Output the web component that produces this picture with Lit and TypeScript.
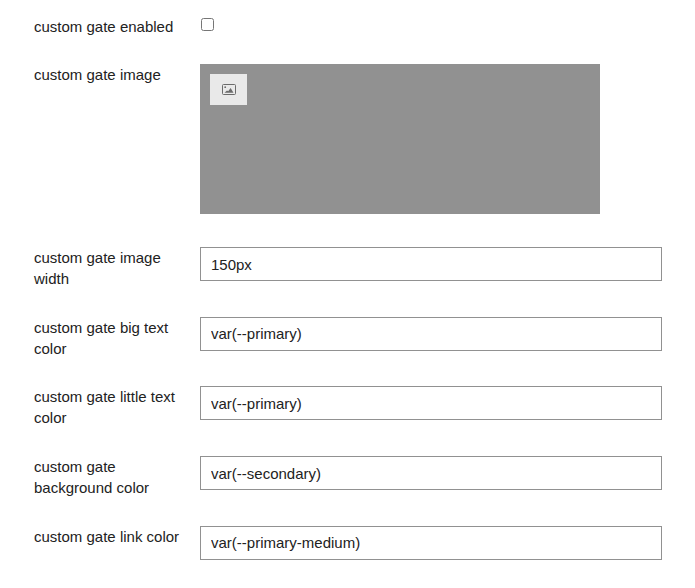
import { LitElement, css, html } from 'lit'
import { customElement } from 'lit/decorators.js'

const textFields = [
  { label: 'custom gate image width', value: '150px' },
  { label: 'custom gate big text color', value: 'var(--primary)' },
  { label: 'custom gate little text color', value: 'var(--primary)' },
  { label: 'custom gate background color', value: 'var(--secondary)' },
  { label: 'custom gate link color', value: 'var(--primary-medium)' },
]

@customElement('app-root')
export class AppRoot extends LitElement {
  render() {
    return html`
      <div class="form">
        <div class="row check-row">
          <div class="name">custom gate enabled</div>
          <div class="value"><input class="check" type="checkbox" /></div>
        </div>
        <div class="row image-row">
          <div class="name">custom gate image</div>
          <div class="value">
            <div class="uploader">
              <button class="upload" aria-label="upload image">
                <svg width="14" height="11" viewBox="0 0 14 11">
                  <rect x="0.5" y="0.5" width="13" height="10" rx="1" fill="#e9e9e9" stroke="#6b6b6b" />
                  <circle cx="3.2" cy="3.2" r="0.9" fill="#6b6b6b" />
                  <path d="M2.5 8.8 L5 6.4 L6.2 7.2 L8.6 4 L11.5 8.8 Z" fill="#6b6b6b" />
                </svg>
              </button>
            </div>
          </div>
        </div>
        ${textFields.map(
          (f) => html`
            <div class="row text-row">
              <div class="name">${f.label}</div>
              <div class="value"><input class="text" type="text" .value=${f.value} /></div>
            </div>
          `
        )}
      </div>
    `
  }

  static styles = css`
    :host {
      display: block;
      background: #fff;
      min-height: 588px;
      font-family: 'Liberation Sans', Arial, sans-serif;
      font-size: 15px;
      color: #222;
    }

    .form {
      display: flex;
      flex-direction: column;
      padding: 16px 33px 0 34px;
    }

    .row {
      display: grid;
      grid-template-columns: 150px 1fr;
      column-gap: 16px;
    }

    .name {
      line-height: 21px;
      color: #222;
    }

    .check-row {
      height: 48px;
    }

    .check {
      display: block;
      width: 13px;
      height: 13px;
      margin: 2px 0 0 1px;
    }

    .image-row {
      height: 183px;
    }

    .uploader {
      width: 400px;
      height: 150px;
      background: #919191;
      padding: 10px;
      box-sizing: border-box;
    }

    .upload {
      display: flex;
      align-items: center;
      justify-content: center;
      width: 37px;
      height: 31px;
      padding: 0;
      border: none;
      background: #e9e9e9;
    }

    .text-row {
      height: 69.7px;
    }

    .text {
      display: block;
      width: 100%;
      height: 34px;
      box-sizing: border-box;
      border: 1px solid #919191;
      border-radius: 0;
      padding: 0 10px;
      margin: 0;
      background: #fff;
      color: #222;
      font: inherit;
      outline: none;
    }
  `
}

declare global {
  interface HTMLElementTagNameMap {
    'app-root': AppRoot
  }
}
